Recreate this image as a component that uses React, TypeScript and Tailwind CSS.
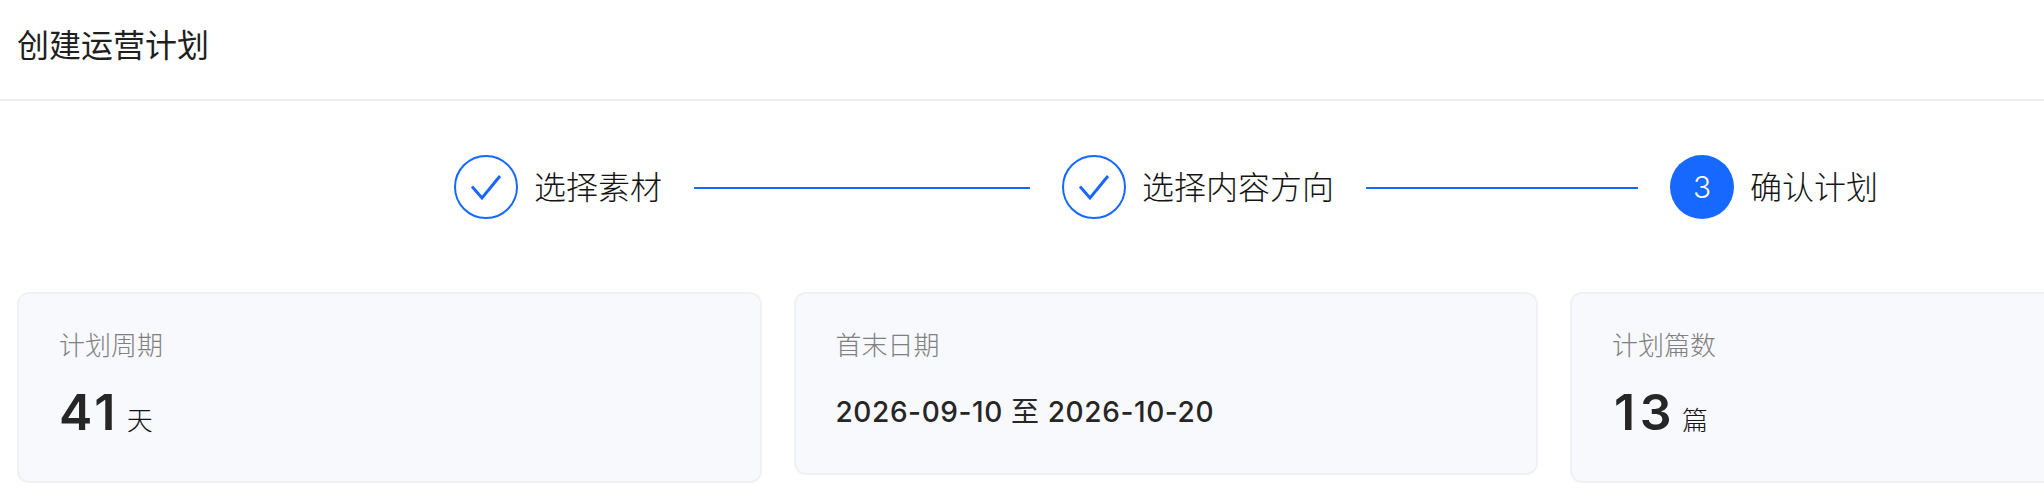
import React from 'react';

const font = { fontFamily: 'Inter, "Noto Sans CJK SC", sans-serif' };

function CheckCircle() {
    return (
        <div className="w-16 h-16 shrink-0 rounded-full border-2 border-[#1668ff]">
            <svg width="60" height="60" viewBox="0 0 60 60" fill="none">
                <path d="M16 29.5 L26 41 L44 19" stroke="#1668ff" strokeWidth="3" />
            </svg>
        </div>
    );
}

function Stat({ label, height, children }: { label: string; height: string; children: React.ReactNode }) {
    return (
        <div className={`w-[744.5px] shrink-0 ${height} rounded-xl border-2 border-[#f0f1f4] bg-[#f8f9fd] px-10 pt-[34px]`}>
            <div className="text-[26px] leading-[36px] text-[#808080] font-light">{label}</div>
            {children}
        </div>
    );
}

export default function App() {
    return (
        <div className="w-[2044px] h-[498px] overflow-hidden bg-white text-[#262626]" style={font}>
            <header className="h-[101px] border-b-2 border-[#eeeeee] pl-[17px] flex items-center">
                <h1 className="text-[32px] font-normal leading-[44px] pb-[8px] text-[#1f1f1f]">创建运营计划</h1>
            </header>

            <div className="pl-[454px] pt-[54px] flex items-center">
                <CheckCircle />
                <span className="ml-4 mt-[2px] text-[32px] leading-[44px] font-light text-[#141414]">选择素材</span>
                <div className="mx-8 mt-[2px] w-[336px] h-0.5 bg-[#1668ff]" />
                <CheckCircle />
                <span className="ml-4 mt-[2px] text-[32px] leading-[44px] font-light text-[#141414]">选择内容方向</span>
                <div className="mx-8 mt-[2px] w-[272px] h-0.5 bg-[#1668ff]" />
                <div className="w-16 h-16 shrink-0 rounded-full bg-[#1668ff] text-white flex items-center justify-center text-[30px] font-light">3</div>
                <span className="ml-4 mt-[2px] text-[32px] leading-[44px] font-light text-[#141414]">确认计划</span>
            </div>

            <div className="pl-[17px] pt-[73px] flex items-start gap-[32px]">
                <Stat label="计划周期" height="h-[191px]">
                    <div className="mt-[18px] flex items-baseline">
                        <span className="text-[50px] font-semibold leading-[60px] tracking-[3.5px]">41</span>
                        <span className="ml-2 text-[26px] font-light text-[#141414]">天</span>
                    </div>
                </Stat>
                <Stat label="首末日期" height="h-[183px]">
                    <div className="mt-[26px] text-[28px] font-medium leading-[44px] tracking-[0.6px]">
                        2026-09-10 <span className="font-normal">至</span> 2026-10-20
                    </div>
                </Stat>
                <Stat label="计划篇数" height="h-[191px]">
                    <div className="mt-[18px] flex items-baseline">
                        <span className="ml-[2px] text-[50px] font-semibold leading-[60px] tracking-[4.5px]">13</span>
                        <span className="ml-[6px] text-[26px] font-light text-[#141414]">篇</span>
                    </div>
                </Stat>
            </div>
        </div>
    );
}
